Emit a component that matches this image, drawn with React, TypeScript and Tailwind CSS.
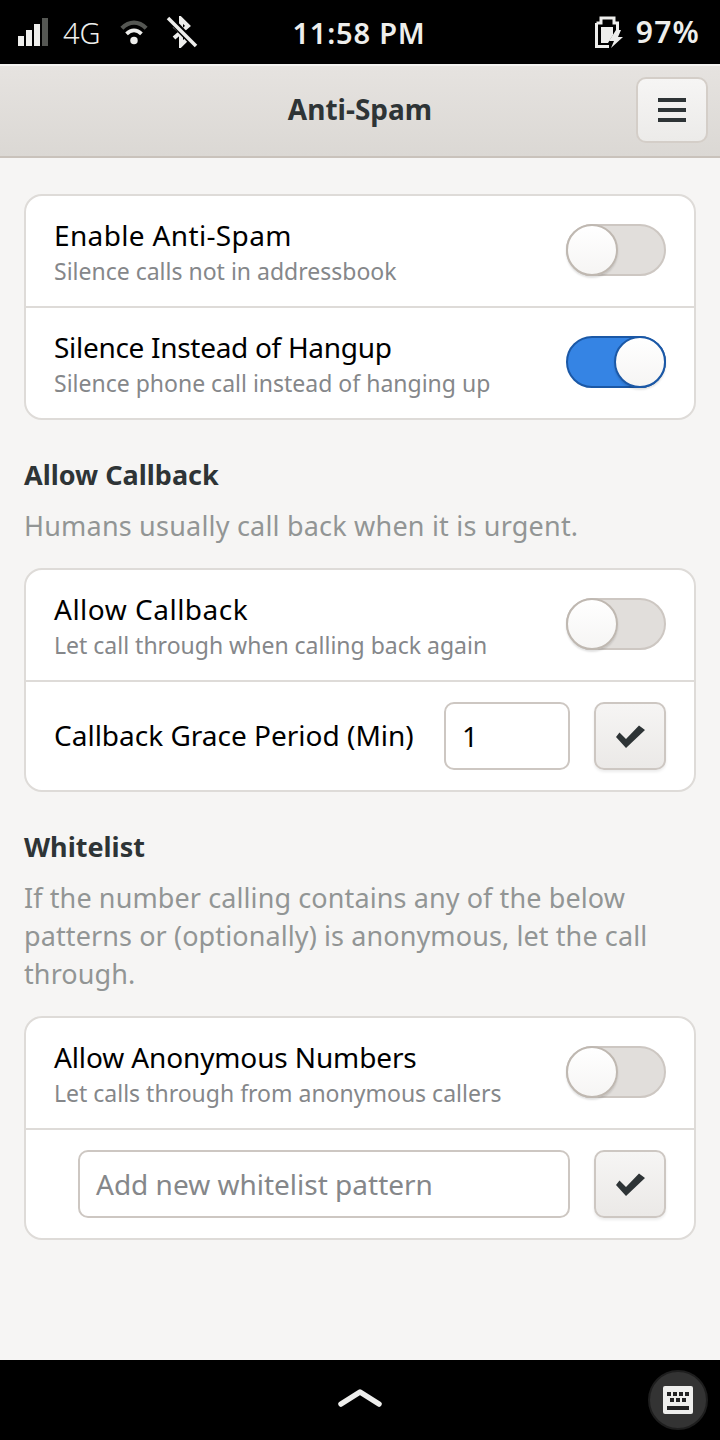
const Toggle = ({ on = false }: { on?: boolean }) => (
  <div
    className={`relative w-[100px] h-[52px] rounded-full border-2 ${
      on ? "bg-[#3584e4] border-[#1b58a6]" : "bg-[#e1dedb] border-[#cdc7c2]"
    }`}
  >
    <div
      className={`absolute top-[-2px] w-[52px] h-[52px] rounded-full border-2 bg-gradient-to-b from-white to-[#f6f5f4] shadow-[0_2px_2px_rgba(0,0,0,0.12)] ${
        on ? "right-[-2px] border-[#1b58a6]" : "left-[-2px] border-[#bfb8b1]"
      }`}
    />
  </div>
);

const CheckButton = () => (
  <button className="flex items-center justify-center w-[72px] h-[68px] rounded-[10px] border-2 border-[#cdc7c2] bg-gradient-to-b from-[#f6f5f4] to-[#ebe9e7] shadow-[0_2px_3px_rgba(0,0,0,0.08)]">
    <svg width="29" height="23" viewBox="0 0 29 23">
      <path d="M0 12 L3.5 7.5 L10 14 L23 0.5 L29 5 L10 23 Z" fill="#2e3436" />
    </svg>
  </button>
);

type SwitchRowProps = {
  title: string;
  sub: string;
  titleClass: string;
  on?: boolean;
  border?: boolean;
};

const SwitchRow = ({ title, sub, titleClass, on, border }: SwitchRowProps) => (
  <div
    className={`flex items-center justify-between pl-[28px] pr-[28px] pb-[2px] ${
      border ? "h-[112px] border-b-2 border-[#dedbd8]" : "h-[110px]"
    }`}
  >
    <div className="flex flex-col pt-[6px]">
      <span className={`text-[28px] leading-[36px] text-black ${titleClass}`}>{title}</span>
      <span className="text-[23px] leading-[36px] text-[#85878a]">{sub}</span>
    </div>
    <Toggle on={on} />
  </div>
);

const App = () => {
  return (
    <div className="w-[720px] h-[1440px] flex flex-col bg-[#f6f5f4] overflow-hidden font-['Noto_Sans',sans-serif]">
      {/* status bar */}
      <div className="flex items-center justify-between h-[64px] bg-black text-[#eeeeec] shrink-0 pl-[18px] pr-[20px]">
        <div className="flex items-center flex-1">
          <svg width="30" height="28" viewBox="0 0 30 28">
            <rect x="0" y="18" width="6" height="10" fill="#eeeeec" />
            <rect x="8" y="12" width="6" height="16" fill="#eeeeec" />
            <rect x="16" y="6" width="6" height="22" fill="#eeeeec" />
            <rect x="24" y="0" width="6" height="28" fill="#555753" />
          </svg>
          <span className="ml-[15px] text-[29px] leading-none font-light">4G</span>
          <svg className="ml-[19px]" width="28" height="26" viewBox="0 0 30 26" fill="none">
            <path d="M2 9 C10 1 20 1 28 9" stroke="#555753" strokeWidth="4.5" />
            <path d="M7 15 C12 10 18 10 23 15" stroke="#eeeeec" strokeWidth="4" />
            <circle cx="15" cy="22" r="4" fill="#eeeeec" />
          </svg>
          <svg className="ml-[18px]" width="32" height="32" viewBox="0 0 32 32" fill="none">
            <path d="M8 10 L22 22 L15 29 L15 3 L22 10 L8 22" stroke="#eeeeec" strokeWidth="4" />
            <path d="M2 1 L30 30" stroke="#000" strokeWidth="7" />
            <path d="M2 2 L30 30" stroke="#eeeeec" strokeWidth="3.5" />
          </svg>
        </div>
        <span className="text-[29px] leading-none font-semibold tracking-[0.8px]">11:58 PM</span>
        <div className="flex items-center justify-end flex-1">
          <svg width="29" height="32" viewBox="0 0 29 32" fill="none">
            <path d="M1.5 7 H6 V2 H19 V7 H22.5 V14 M1.5 7 V30.5 H14" stroke="#eeeeec" strokeWidth="3" />
            <path d="M6 11 H18 V19 L13 27 H6 Z" fill="#eeeeec" />
            <path d="M21 14 L14 25 H19 L16 32 L28 21 H23 L26 14 Z" fill="#eeeeec" />
          </svg>
          <span className="ml-[12px] text-[30px] leading-none font-semibold tracking-[1.2px]">97%</span>
        </div>
      </div>

      {/* header */}
      <div className="relative flex items-center justify-center h-[94px] pb-[4px] shrink-0 border-t-2 border-t-[#f4f3f1] border-b-2 border-b-[#c9c2bb] bg-gradient-to-b from-[#e6e3e0] to-[#dbd8d4]">
        <span className="text-[28px] font-bold text-[#2e3436]">Anti-Spam</span>
        <button className="absolute right-[12px] top-[11px] flex flex-col items-center justify-center gap-[6px] w-[72px] h-[66px] rounded-[10px] border-2 border-[#d4cec8] bg-gradient-to-b from-[#f6f5f4] to-[#ecebe9]">
          <span className="block w-[28px] h-[4px] bg-[#2e3436]" />
          <span className="block w-[28px] h-[4px] bg-[#2e3436]" />
          <span className="block w-[28px] h-[4px] bg-[#2e3436]" />
        </button>
      </div>

      {/* content */}
      <div className="flex-1 flex flex-col px-[24px] pt-[36px]">
        <div className="rounded-[18px] border-2 border-[#dedbd8] bg-white">
          <SwitchRow title="Enable Anti-Spam" titleClass="tracking-[0.35px]" sub="Silence calls not in addressbook" border />
          <SwitchRow title="Silence Instead of Hangup" titleClass="tracking-[-0.3px]" sub="Silence phone call instead of hanging up" on />
        </div>

        <h2 className="mt-[35px] text-[27px] leading-[40px] font-bold text-[#2e3436]">Allow Callback</h2>
        <p className="mt-[12px] text-[27px] leading-[38px] text-[#929595] tracking-[0.2px]">Humans usually call back when it is urgent.</p>

        <div className="mt-[23px] rounded-[18px] border-2 border-[#dedbd8] bg-white">
          <SwitchRow title="Allow Callback" titleClass="tracking-[0.5px]" sub="Let call through when calling back again" border />
          <div className="flex items-center justify-between h-[108px] pl-[28px] pr-[28px]">
            <span className="text-[28px] text-black pb-[2px]">Callback Grace Period (Min)</span>
            <div className="flex items-center gap-[24px]">
              <div className="flex items-center w-[126px] h-[68px] px-[16px] rounded-[10px] border-2 border-[#cdc7c2] bg-white text-[28px] text-black">
                1
              </div>
              <CheckButton />
            </div>
          </div>
        </div>

        <h2 className="mt-[35px] text-[27px] leading-[40px] font-bold text-[#2e3436]">Whitelist</h2>
        <p className="mt-[12px] text-[27px] leading-[38px] text-[#929595] tracking-[0.1px]">
          If the number calling contains any of the below patterns or (optionally) is anonymous, let the call through.
        </p>

        <div className="mt-[23px] rounded-[18px] border-2 border-[#dedbd8] bg-white">
          <SwitchRow title="Allow Anonymous Numbers" titleClass="tracking-[-0.13px]" sub="Let calls through from anonymous callers" border />
          <div className="flex items-center justify-end gap-[24px] h-[108px] pr-[28px]">
            <div className="flex items-center w-[492px] h-[68px] px-[16px] rounded-[10px] border-2 border-[#cdc7c2] bg-white text-[28px] text-[#85878a]">
              Add new whitelist pattern
            </div>
            <CheckButton />
          </div>
        </div>
      </div>

      {/* bottom bar */}
      <div className="relative flex items-center justify-center h-[80px] shrink-0 bg-black">
        <svg width="44" height="22" viewBox="0 0 44 22" fill="none">
          <path d="M3 15 L22 3 L41 15" stroke="#eeeeec" strokeWidth="5.5" strokeLinecap="round" strokeLinejoin="round" />
        </svg>
        <div className="absolute left-[648px] top-[10px] flex items-center justify-center w-[60px] h-[60px] rounded-full border-2 border-[#1e1e1e] bg-[#333333]">
          <svg width="30" height="28" viewBox="0 0 30 28">
            <rect width="30" height="28" rx="2" fill="#eeeeec" />
            <g fill="#222">
              <rect x="4" y="6" width="4" height="4" />
              <rect x="10" y="6" width="4" height="4" />
              <rect x="16" y="6" width="4" height="4" />
              <rect x="22" y="6" width="4" height="4" />
              <rect x="7" y="12" width="4" height="4" />
              <rect x="13" y="12" width="4" height="4" />
              <rect x="19" y="12" width="4" height="4" />
              <rect x="4" y="20" width="22" height="4" />
            </g>
          </svg>
        </div>
      </div>
    </div>
  );
};

export default App;
